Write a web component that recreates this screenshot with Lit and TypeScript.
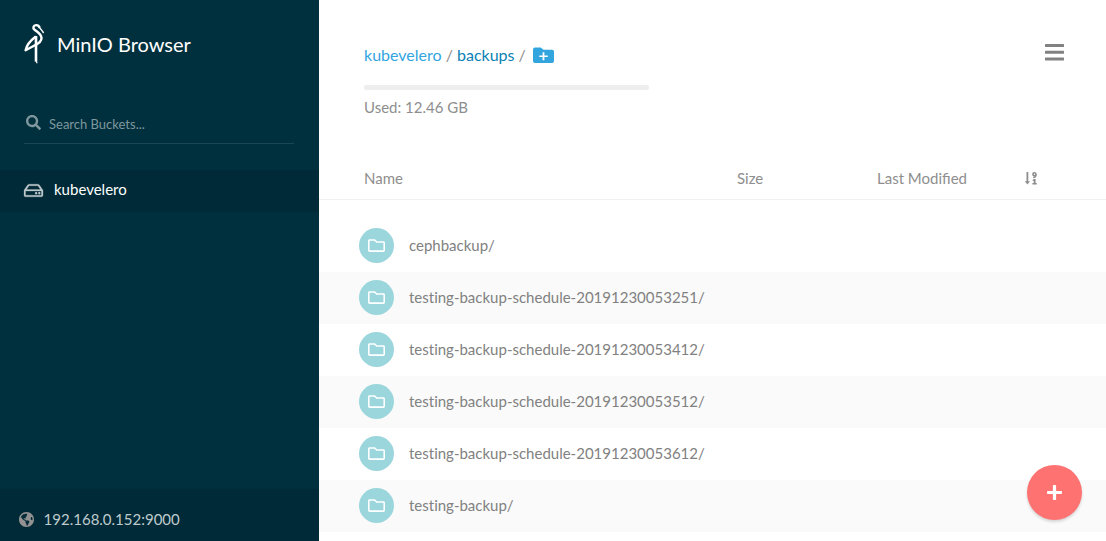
import { LitElement, html, css, svg } from "lit";
import { customElement, property } from "lit/decorators.js";

const icons: Record<string, { box: string; body: unknown }> = {
  search: {
    box: "0 0 512 512",
    body: svg`<path d="M505 442.7L405.3 343c-4.5-4.5-10.6-7-17-7H372c27.6-35.3 44-79.7 44-128C416 93.1 322.9 0 208 0S0 93.1 0 208s93.1 208 208 208c48.3 0 92.7-16.4 128-44v16.3c0 6.4 2.5 12.5 7 17l99.7 99.7c9.4 9.4 24.6 9.4 33.9 0l28.3-28.3c9.4-9.4 9.4-24.6.1-34zM208 336c-70.7 0-128-57.2-128-128 0-70.7 57.2-128 128-128 70.7 0 128 57.2 128 128 0 70.7-57.2 128-128 128z"/>`,
  },
  hdd: {
    box: "0 64 576 384",
    body: svg`<path stroke="currentColor" stroke-width="8" d="M567.403 235.642L462.323 84.589A48 48 0 0 0 422.919 64H153.081a48 48 0 0 0-39.404 20.589L8.597 235.642A48.001 48.001 0 0 0 0 263.054V400c0 26.510 21.490 48 48 48h480c26.510 0 48-21.490 48-48V263.054c0-9.801-3-19.366-8.597-27.412zM153.081 112h269.838l77.913 112H75.168l77.913-112zM528 400H48V272h480v128zm-32-64c0 17.673-14.327 32-32 32s-32-14.327-32-32 14.327-32 32-32 32 14.327 32 32zm-96 0c0 17.673-14.327 32-32 32s-32-14.327-32-32 14.327-32 32-32 32 14.327 32 32z"/>`,
  },
  folder: {
    box: "0 64 512 384",
    body: svg`<path d="M464 128H272l-54.63-54.63c-6-6-14.14-9.37-22.63-9.37H48C21.49 64 0 85.49 0 112v288c0 26.510 21.490 48 48 48h416c26.510 0 48-21.490 48-48V176c0-26.510-21.490-48-48-48zm0 272H48V112h140.120l54.630 54.630c6 6 14.140 9.370 22.630 9.370H464v224z"/>`,
  },
  folderPlus: {
    box: "0 0 21 16",
    body: svg`<path fill-rule="evenodd" d="M2 .5h5.8l2.6 2.3H19a2 2 0 0 1 2 2V14a2 2 0 0 1-2 2H2a2 2 0 0 1-2-2V2.500a2 2 0 0 1 2-2zM9.600 5.200V8.400H6.200v1.700h3.400v3.200h1.800v-3.200h3.400V8.400h-3.400V5.200z"/>`,
  },
  bars: {
    box: "0 0 19 17",
    body: svg`<rect width="19" height="3" rx=".6"/><rect y="6.800" width="19" height="3" rx=".6"/><rect y="13.500" width="19" height="3" rx=".6"/>`,
  },
  plus: {
    box: "0 32 448 448",
    body: svg`<path d="M416 208H272V64c0-17.670-14.330-32-32-32h-32c-17.670 0-32 14.330-32 32v144H32c-17.670 0-32 14.330-32 32v32c0 17.670 14.330 32 32 32h144v144c0 17.670 14.330 32 32 32h32c17.670 0 32-14.330 32-32V304h144c17.670 0 32-14.330 32-32v-32c0-17.670-14.330-32-32-32z"/>`,
  },
  sort: {
    box: "0 0 12 13",
    body: svg`<path d="M1.500 0h1.800v9.200h1.700L2.400 12.600-.2 9.200h1.700z"/><circle cx="9.400" cy="2.200" r="1.500" fill="none" stroke="currentColor" stroke-width="1.600"/><path d="M11 2.400c0 1.800-.8 2.900-2.800 3.100" fill="none" stroke="currentColor" stroke-width="1.500"/><path d="M7.500 8l1.400-1h1.700v4h1.200v1.600H7.400V11h1.300V8.700l-.9.400z"/>`,
  },
  globe: {
    box: "0 8 496 496",
    body: svg`<path d="M248 8C111.030 8 0 119.030 0 256s111.030 248 248 248 248-111.030 248-248S384.970 8 248 8zm82.290 357.600c-3.900 3.880-7.990 7.950-11.310 11.280-2.990 3-5.100 6.700-6.170 10.710-1.510 5.660-2.730 11.380-4.770 16.870l-17.390 46.850c-13.760 3-28 4.690-42.650 4.690v-27.380c1.690-12.620-7.640-36.260-22.630-51.250-6-6-9.370-14.140-9.370-22.630v-32.010c0-11.640-6.270-22.340-16.460-27.970-14.370-7.950-34.810-19.060-48.810-26.110-11.480-5.780-22.100-13.140-31.650-21.750l-.8-.72a114.792 114.792 0 0 1-18.060-20.740c-9.380-13.770-24.660-36.420-34.590-51.140 20.470-45.500 57.360-82.040 103.200-101.890l24.010 12.010C203.480 89.740 216 82.010 216 70.110v-11.300c7.990-1.290 16.120-2.110 24.390-2.420l28.300 28.300c6.250 6.250 6.250 16.380 0 22.630L264 112l-10.340 10.340c-3.120 3.120-3.120 8.190 0 11.310l4.690 4.690c3.120 3.120 3.120 8.190 0 11.310l-8 8a8.008 8.008 0 0 1-5.660 2.340h-8.990c-2.080 0-4.080.81-5.580 2.270l-9.920 9.650a8.008 8.008 0 0 0-1.580 9.310l15.590 31.190c2.660 5.320-1.210 11.580-7.150 11.580h-5.640c-1.930 0-3.790-.7-5.240-1.960l-9.280-8.060a16.017 16.017 0 0 0-15.550-3.100l-31.170 10.390a11.950 11.950 0 0 0-8.170 11.340c0 4.530 2.560 8.660 6.610 10.690l11.080 5.540c9.410 4.710 19.790 7.160 30.310 7.160s22.590 27.290 32 32h66.750c8.490 0 16.620 3.370 22.630 9.370l13.690 13.690a30.503 30.503 0 0 1 8.930 21.570 46.536 46.536 0 0 1-13.720 32.980zM417 274.250c-5.790-1.450-10.840-5-14.150-9.970l-17.980-26.970a23.970 23.970 0 0 1 0-26.620l19.590-29.380c2.320-3.470 5.500-6.290 9.240-8.150l12.980-6.490C440.200 193.590 448 223.870 448 256c0 8.670-.74 17.160-1.820 25.540L417 274.250z"/>`,
  },
  crane: {
    box: "0 0 21 41",
    body: svg`<g fill="none" stroke="currentColor" stroke-linejoin="round"><path stroke-width="2.400" d="M15.800 4.800C15 2.800 13.700 2 12 2.100 9.300 2.300 8.600 5 10.400 6.600c2.700 2.300 7.100 4.200 7.100 8.700 0 3.600-3 5.300-6.600 7L1.600 27.300C2.600 22 6.500 17.500 11.800 13.500"/><path stroke-width="2.600" d="M12 13v25.500"/><path stroke-width="1.200" d="M12 38l1.200 2.300"/><path stroke-width="1.400" d="M14.800 4c2 1.600 3.100 3.600 4.800 6"/></g>`,
  },
};

@customElement("app-icon")
class AppIcon extends LitElement {
  @property() name = "";
  static styles = css`
    :host { display: block; flex: none; }
    svg { display: block; width: 100%; height: 100%; fill: currentColor; overflow: visible; }
  `;
  render() {
    const icon = icons[this.name];
    return icon ? html`<svg viewBox=${icon.box}>${icon.body}</svg>` : null;
  }
}

@customElement("app-sidebar")
class AppSidebar extends LitElement {
  static styles = css`
    :host { display: flex; flex-direction: column; width: 319px; flex: none; background: #00303d; color: #fff; }
    .brand { display: flex; align-items: center; height: 41px; padding: 23px 24px 0; }
    .logo { width: 21px; height: 41px; }
    .title { margin-left: 12px; font-size: 20px; line-height: 24px; }
    .search { display: flex; box-sizing: border-box; margin: 41px 25px 0 24px; height: 39px; padding: 10px 0 0 2px; border-bottom: 1px solid #1a4552; color: #7f979e; }
    .search-icon { width: 15px; height: 15px; }
    .hint { margin-left: 8px; font-size: 13px; line-height: 19px; }
    .bucket { display: flex; align-items: center; box-sizing: border-box; height: 42px; margin-top: 26px; padding: 0 24px 2px; background: #002a37; font-size: 15px; }
    .bucket-icon { width: 19px; height: 13px; color: #bfcacd; margin-top: 1px; }
    .bucket-name { margin-left: 11px; line-height: 20px; margin-bottom: 2px; }
    .host { display: flex; align-items: center; box-sizing: border-box; height: 52px; margin-top: auto; padding: 8px 19px 0; background: #002a37; font-size: 15px; color: #bfcacd; }
    .globe { width: 15px; height: 15px; color: #929292; }
    .address { margin-left: 9.600px; }
  `;
  render() {
    return html`
      <div class="brand"><app-icon class="logo" name="crane"></app-icon><span class="title">MinIO Browser</span></div>
      <div class="search"><app-icon class="search-icon" name="search"></app-icon><span class="hint">Search Buckets...</span></div>
      <div class="bucket"><app-icon class="bucket-icon" name="hdd"></app-icon><span class="bucket-name">kubevelero</span></div>
      <div class="host"><app-icon class="globe" name="globe"></app-icon><span class="address">192.168.0.152:9000</span></div>
    `;
  }
}

@customElement("app-root")
class AppRoot extends LitElement {
  private folders = [
    "cephbackup/",
    "testing-backup-schedule-20191230053251/",
    "testing-backup-schedule-20191230053412/",
    "testing-backup-schedule-20191230053512/",
    "testing-backup-schedule-20191230053612/",
    "testing-backup/",
  ];
  static styles = css`
    :host { display: flex; position: relative; height: 541px; overflow: hidden; background: #fff; font-family: Lato, sans-serif; font-size: 15px; color: #818181; }
    .main { flex: 1; min-width: 0; display: flex; flex-direction: column; }
    .top { display: flex; justify-content: space-between; box-sizing: border-box; height: 157px; padding: 44px 42px 0 45px; color: #8e8e8e; }
    .crumbs { display: flex; align-items: center; height: 21px; white-space: pre; font-size: 16px; }
    .bucket { color: #32a5df; }
    .current { color: #0b7fb3; }
    .add { width: 21px; height: 16px; margin-left: 7.500px; color: #32a5df; }
    .bar { width: 285px; height: 5px; margin-top: 20px; border-radius: 2px; background: #eee; }
    .used { margin-top: 8px; line-height: 18px; }
    .menu { width: 19px; height: 17px; color: #818181; }
    .head { display: grid; grid-template-columns: 373px 140px 148px 1fr; align-items: center; box-sizing: border-box; height: 43px; padding-left: 45px; border-bottom: 1px solid #f0f0f0; color: #8e8e8e; }
    .sort { width: 12px; height: 13px; }
    .rows { padding-top: 20px; }
    .row { display: flex; align-items: center; box-sizing: border-box; height: 52px; padding: 0 0 2px 40px; }
    .row:nth-child(even) { background: #fafafa; }
    .disc { display: grid; place-items: center; width: 35px; height: 35px; border-radius: 50%; background: #9bd6dc; color: #fff; }
    .folder { width: 17px; height: 13px; }
    .name { margin-left: 15px; font-variant-ligatures: none; }
    .fab { position: absolute; right: 24px; bottom: 21px; display: grid; place-items: center; width: 55px; height: 55px; border-radius: 50%; background: #ff7272; color: #fff; box-shadow: 0 2px 3px rgba(0, 0, 0, 0.15); }
    .plus { width: 15px; height: 15px; }
  `;
  render() {
    return html`
      <app-sidebar></app-sidebar>
      <div class="main">
        <div class="top">
          <div>
            <div class="crumbs"><span class="bucket">kubevelero</span><span> / </span><span class="current">backups</span><span> /</span><app-icon class="add" name="folderPlus"></app-icon></div>
            <div class="bar"></div>
            <div class="used">Used: 12.46 GB</div>
          </div>
          <app-icon class="menu" name="bars"></app-icon>
        </div>
        <div class="head"><span>Name</span><span>Size</span><span>Last Modified</span><app-icon class="sort" name="sort"></app-icon></div>
        <div class="rows">
          ${this.folders.map((name) => html`<div class="row"><div class="disc"><app-icon class="folder" name="folder"></app-icon></div><span class="name">${name}</span></div>`)}
        </div>
      </div>
      <div class="fab"><app-icon class="plus" name="plus"></app-icon></div>
    `;
  }
}
